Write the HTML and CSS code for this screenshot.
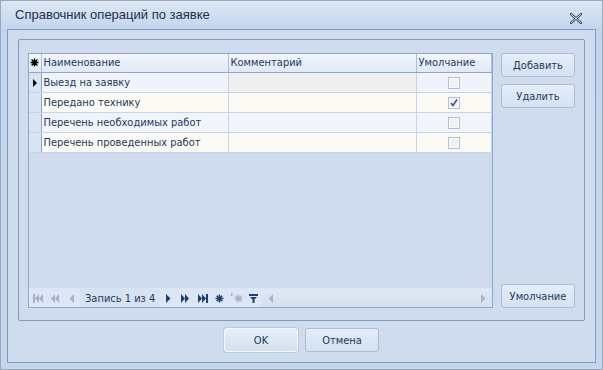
FILE: index.html
```html
<!DOCTYPE html>
<html lang="ru">
<head>
    <meta charset="UTF-8">
    <title>Справочник операций по заявке</title>
    <link rel="stylesheet" href="styles.css">
</head>
<body>
    <div class="window">
        <div class="title-bar">
            <span class="title">Справочник операций по заявке</span>
            <svg class="close-icon" width="12" height="11" viewBox="0 0 12 11">
                <path d="M1 1 L11 10 M11 1 L1 10" stroke="#3c4a5e" stroke-width="2.4" stroke-linecap="square"/>
                <path d="M1 1 L11 10 M11 1 L1 10" stroke="#f4f7fb" stroke-width="0.9"/>
            </svg>
        </div>

        <div class="client">
            <div class="group">
                <div class="grid">
                    <table class="grid-table">
                        <colgroup>
                            <col class="col-ind">
                            <col class="col-name">
                            <col class="col-comment">
                            <col>
                        </colgroup>
                        <thead>
                            <tr>
                                <th class="ind">
                                    <svg width="9" height="9" viewBox="0 0 9 9"><path d="M4.5 0.5 V8.5 M0.5 4.5 H8.5 M1.6 1.6 L7.4 7.4 M7.4 1.6 L1.6 7.4" stroke="#000" stroke-width="1.4"/></svg>
                                </th>
                                <th>Наименование</th>
                                <th>Комментарий</th>
                                <th>Умолчание</th>
                            </tr>
                        </thead>
                        <tbody>
                            <tr class="row focused">
                                <td class="ind"><span class="pointer"></span></td>
                                <td>Выезд на заявку</td>
                                <td class="comment"></td>
                                <td class="check-cell"><span class="check"></span></td>
                            </tr>
                            <tr class="row odd">
                                <td class="ind"></td>
                                <td>Передано технику</td>
                                <td></td>
                                <td class="check-cell">
                                    <span class="check checked">
                                        <svg width="8" height="8" viewBox="0 0 8 8"><path d="M1 4 L3 6.5 L7 0.5" fill="none" stroke="#3a5687" stroke-width="1.6"/></svg>
                                    </span>
                                </td>
                            </tr>
                            <tr class="row even">
                                <td class="ind"></td>
                                <td>Перечень необходимых работ</td>
                                <td></td>
                                <td class="check-cell"><span class="check"></span></td>
                            </tr>
                            <tr class="row odd">
                                <td class="ind"></td>
                                <td>Перечень проведенных работ</td>
                                <td></td>
                                <td class="check-cell"><span class="check"></span></td>
                            </tr>
                        </tbody>
                    </table>

                    <div class="grid-space"></div>

                    <div class="navigator">
                        <div class="nav-buttons">
                            <span class="nav-btn off"><svg width="10" height="9" viewBox="0 0 10 9"><rect x="0" y="0" width="2" height="9"/><path d="M6 0 L2 4.5 L6 9Z M10 0 L6 4.5 L10 9Z"/></svg></span>
                            <span class="nav-btn off"><svg width="9" height="9" viewBox="0 0 9 9"><path d="M5 0 L1 4.5 L5 9Z M9 0 L5 4.5 L9 9Z"/></svg></span>
                            <span class="nav-btn off"><svg width="5" height="9" viewBox="0 0 5 9"><path d="M5 0 L0.5 4.5 L5 9Z"/></svg></span>
                        </div>
                        <span class="nav-text">Запись 1 из 4</span>
                        <div class="nav-buttons">
                            <span class="nav-btn"><svg width="5" height="9" viewBox="0 0 5 9"><path d="M0 0 L4.5 4.5 L0 9Z"/></svg></span>
                            <span class="nav-btn"><svg width="9" height="9" viewBox="0 0 9 9"><path d="M0 0 L4 4.5 L0 9Z M4 0 L8 4.5 L4 9Z"/></svg></span>
                            <span class="nav-btn"><svg width="10" height="9" viewBox="0 0 10 9"><path d="M0 0 L4 4.5 L0 9Z M4 0 L8 4.5 L4 9Z"/><rect x="8" y="0" width="2" height="9"/></svg></span>
                            <span class="nav-btn"><svg width="9" height="9" viewBox="0 0 9 9"><path d="M4.5 0.5 V8.5 M0.5 4.5 H8.5 M1.7 1.7 L7.3 7.3 M7.3 1.7 L1.7 7.3" stroke="#1f3f74" stroke-width="1.5"/></svg></span>
                            <span class="nav-btn off"><svg width="12" height="10" viewBox="0 0 12 10"><rect x="0" y="0" width="1.5" height="3"/><path d="M7.5 1.5 V9.5 M3.5 5.5 H11.5 M4.7 2.7 L10.3 8.3 M10.3 2.7 L4.7 8.3" stroke="#a7b3c3" stroke-width="1.3"/></svg></span>
                            <span class="nav-btn"><svg width="9" height="9" viewBox="0 0 9 9"><path d="M0 0 H9 V2 H0Z M1 3 H8 L5.5 5.5 V9 H3.5 V5.5Z"/></svg></span>
                        </div>
                        <div class="hscroll">
                            <svg width="5" height="9" viewBox="0 0 5 9"><path d="M5 0 L0.5 4.5 L5 9Z"/></svg>
                            <svg width="5" height="9" viewBox="0 0 5 9"><path d="M0 0 L4.5 4.5 L0 9Z"/></svg>
                        </div>
                    </div>
                </div>

                <div class="side-buttons">
                    <button class="btn">Добавить</button>
                    <button class="btn">Удалить</button>
                    <div class="spacer"></div>
                    <button class="btn">Умолчание</button>
                </div>
            </div>

            <div class="dialog-buttons">
                <button class="btn default">OK</button>
                <button class="btn">Отмена</button>
            </div>
        </div>
    </div>
</body>
</html>
```

FILE: styles.css
```css
* {
    margin: 0;
    padding: 0;
    box-sizing: border-box;
}

body {
    background: #cfdcee;
    font-family: 'DejaVu Sans Condensed', 'Liberation Sans', Arial, sans-serif;
    font-size: 11px;
    color: #1e395b;
}

.window {
    width: 603px;
    height: 370px;
    border: 1px solid #9aa7b8;
    background: linear-gradient(#dde7f4, #c3d5ec 28px, #c5d6ec);
    padding: 0 6px 6px 6px;
    display: flex;
    flex-direction: column;
}

.title-bar {
    height: 28px;
    display: flex;
    align-items: center;
    justify-content: space-between;
    padding: 0 14px 0 8px;
}

.title {
    font-family: 'Liberation Sans', Arial, sans-serif;
    font-size: 13px;
    color: #1e2f47;
    margin-top: -1px;
}

.close-icon {
    margin-top: 6px;
}

.client {
    flex: 1;
    border: 1px solid #7f9bc0;
    background: #cfdcee;
    padding: 9px 10px 10px 10px;
    display: flex;
    flex-direction: column;
}

.group {
    flex: 1;
    border: 1px solid #7f9bc0;
    border-radius: 2px;
    padding: 13px 8px 12px 9px;
    display: flex;
    gap: 8px;
}

/* grid */

.grid {
    width: 465px;
    border: 1px solid #8da8cd;
    display: flex;
    flex-direction: column;
    background: #d0dcee;
}

.grid-table {
    border-collapse: collapse;
    table-layout: fixed;
    width: 100%;
    font-size: 11px;
}

.col-ind {
    width: 12px;
}

.col-name {
    width: 187px;
}

.col-comment {
    width: 188px;
}

.grid-table th {
    height: 18px;
    font-weight: normal;
    text-align: left;
    padding: 0 2px;
    color: #1e395b;
    background: linear-gradient(#f3f7fc, #dfe8f5);
    border-right: 1px solid #a9bedd;
    border-bottom: 1px solid #8da8cd;
    white-space: nowrap;
    overflow: hidden;
}

.grid-table th.ind {
    padding: 1px 0 0 0;
    text-align: center;
}

.grid-table td {
    height: 20px;
    padding: 0 2px;
    border-right: 1px solid #c3d4ec;
    border-bottom: 1px solid #c3d4ec;
    color: #1e395b;
    white-space: nowrap;
}

.grid-table td.ind {
    padding: 0;
    background: #d9e4f3;
    border-right: 1px solid #8da8cd;
    border-bottom: 1px solid #c3d4ec;
    text-align: center;
}

.row.odd td {
    background: #fbfbf4;
}

.row.even td {
    background: #f1f5fb;
}

.row.focused td {
    background: #f0f4fa;
}

.row.focused td.comment {
    background: #efefef;
}

.row td.ind {
    background: #d9e4f3;
}

.pointer {
    display: inline-block;
    width: 0;
    height: 0;
    border-top: 4px solid transparent;
    border-bottom: 4px solid transparent;
    border-left: 4px solid #000;
    vertical-align: middle;
}

.check-cell {
    text-align: center;
}

.check {
    display: inline-flex;
    align-items: center;
    justify-content: center;
    width: 12px;
    height: 12px;
    border: 1px solid #b3bfce;
    background: #eef0f3;
    box-shadow: inset 0 0 0 1px #fbfcfd;
    vertical-align: middle;
}

.grid-space {
    flex: 1;
    border-top: 1px solid #c3d4ec;
    margin-top: -1px;
}

.navigator {
    height: 19px;
    display: flex;
    align-items: center;
    background: #d6e1f1;
    border-top: 1px solid #dae4f2;
}

.nav-buttons {
    display: flex;
    align-items: center;
    height: 100%;
    background: #dce6f4;
}

.nav-btn {
    width: 17px;
    display: flex;
    justify-content: center;
    align-items: center;
    fill: #1f3f74;
}

.nav-btn.off {
    fill: #a7b3c3;
}

.nav-text {
    width: 80px;
    padding-left: 5px;
    font-size: 11px;
    color: #1e395b;
    white-space: nowrap;
}

.hscroll {
    flex: 1;
    height: 100%;
    display: flex;
    justify-content: space-between;
    align-items: center;
    padding: 0 6px 0 6px;
    background: linear-gradient(#dfe7f3, #d5e0ef);
    fill: #aab6c6;
}

/* buttons */

.side-buttons {
    width: 74px;
    display: flex;
    flex-direction: column;
    gap: 7px;
}

.spacer {
    flex: 1;
}

.btn {
    width: 74px;
    height: 24px;
    border: 1px solid #abbdd6;
    border-radius: 3px;
    background: linear-gradient(#e5edf8, #d5e1f1);
    font-family: 'DejaVu Sans Condensed', 'Liberation Sans', Arial, sans-serif;
    font-size: 11px;
    color: #1e395b;
}

.btn.default {
    border-color: #f6f9fd;
    box-shadow: 0 0 0 1px #b9c9df;
}

.dialog-buttons {
    display: flex;
    justify-content: center;
    gap: 7px;
    padding-top: 7px;
}
```
